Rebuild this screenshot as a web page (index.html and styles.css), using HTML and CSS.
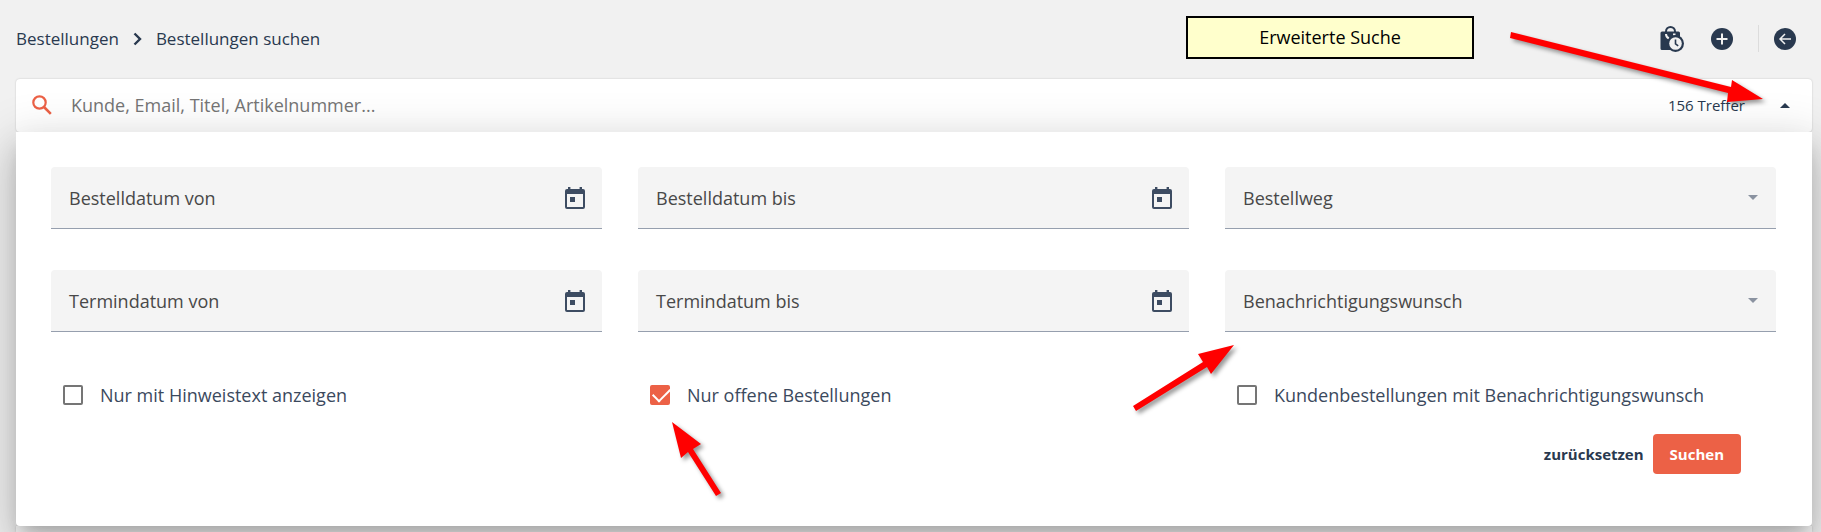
FILE: index.html
```html
<!DOCTYPE html>
<html lang="de">
    <head>
        <title>Bestellungen suchen</title>
        <meta charset="UTF-8">
        <link rel="stylesheet" href="styles.css">
    </head>
    <body>
        <header class="header">
            <nav class="breadcrumb">
                <a href="#">Bestellungen</a>
                <svg width="9" height="14" viewBox="0 0 9 14"><path d="M1.500 1.500L7 7l-5.500 5.500" fill="none" stroke="currentColor" stroke-width="2.400"/></svg>
                <a href="#">Bestellungen suchen</a>
            </nav>
            <div class="actions">
                <button class="icon-button" type="button" aria-label="Offene Bestellungen">
                    <svg width="24" height="26" viewBox="0 0 24 26">
                        <path d="M6 7V5.500a4.500 4.500 0 0 1 9 0V7" fill="none" stroke="currentColor" stroke-width="2"/>
                        <path d="M2 5.500h16.500a1.500 1.500 0 0 1 1.500 1.500V24H2a1.500 1.500 0 0 1-1.500-1.500V7A1.500 1.500 0 0 1 2 5.500z" fill="currentColor"/>
                        <path d="M6 8c0 2 1 3.500 3 4.500M15.500 8.500H13" fill="none" stroke="#f1f1f1" stroke-width="2"/>
                        <circle cx="15.500" cy="17.500" r="8.500" fill="currentColor"/>
                        <circle cx="15.500" cy="17.500" r="6.300" fill="#f1f1f1"/>
                        <path d="M15.500 13.500v4.300l2.700 2" fill="none" stroke="currentColor" stroke-width="1.600"/>
                    </svg>
                </button>
                <button class="icon-button" type="button" aria-label="Neu">
                    <svg width="22" height="22" viewBox="0 0 22 22"><circle cx="11" cy="11" r="11" fill="currentColor"/><path d="M11 5.500v11M5.500 11h11" stroke="#f1f1f1" stroke-width="2"/></svg>
                </button>
                <span class="divider"></span>
                <button class="icon-button" type="button" aria-label="Zurück">
                    <svg width="22" height="22" viewBox="0 0 22 22"><circle cx="11" cy="11" r="11" fill="currentColor"/><path d="M17 11H6.500M11 6l-5 5 5 5" fill="none" stroke="#f1f1f1" stroke-width="1.500"/></svg>
                </button>
            </div>
            <div class="note">Erweiterte Suche</div>
        </header>

        <main class="content">
            <div class="search-bar">
                <svg width="20" height="20" viewBox="0 0 20 20" class="search-icon"><circle cx="7.500" cy="7.500" r="6.200" fill="none" stroke="currentColor" stroke-width="2.200"/><path d="M12 12l6.800 6.800" stroke="currentColor" stroke-width="2.600"/></svg>
                <input class="search-input" type="text" aria-label="Suche" placeholder="Kunde, Email, Titel, Artikelnummer...">
                <span class="hits">156 Treffer</span>
                <button class="icon-button" type="button" aria-label="Erweiterte Suche">
                    <svg width="10" height="5" viewBox="0 0 10 5"><path d="M0 5l5-5 5 5z" fill="currentColor"/></svg>
                </button>
            </div>

            <form class="panel">
                <div class="field">
                    <label for="order-from">Bestelldatum von</label>
                    <input id="order-from" type="text">
                    <button class="icon-button" type="button" aria-label="Kalender">
                        <svg class="calendar" width="20" height="22" viewBox="0 0 20 22"><path d="M3 0h2.400v2h9.200V0H17v2h1a2 2 0 0 1 2 2v16a2 2 0 0 1-2 2H2a2 2 0 0 1-2-2V4a2 2 0 0 1 2-2h1zM2 7v13h16V7zM5 10h5v5H5z" fill="currentColor" fill-rule="evenodd"/></svg>
                    </button>
                </div>
                <div class="field">
                    <label for="order-to">Bestelldatum bis</label>
                    <input id="order-to" type="text">
                    <button class="icon-button" type="button" aria-label="Kalender">
                        <svg class="calendar" width="20" height="22" viewBox="0 0 20 22"><path d="M3 0h2.400v2h9.200V0H17v2h1a2 2 0 0 1 2 2v16a2 2 0 0 1-2 2H2a2 2 0 0 1-2-2V4a2 2 0 0 1 2-2h1zM2 7v13h16V7zM5 10h5v5H5z" fill="currentColor" fill-rule="evenodd"/></svg>
                    </button>
                </div>
                <div class="field">
                    <label for="order-way">Bestellweg</label>
                    <select id="order-way"><option></option></select>
                    <svg class="caret" width="10" height="5" viewBox="0 0 10 5"><path d="M0 0h10L5 5z" fill="currentColor"/></svg>
                </div>

                <div class="field">
                    <label for="due-from">Termindatum von</label>
                    <input id="due-from" type="text">
                    <button class="icon-button" type="button" aria-label="Kalender">
                        <svg class="calendar" width="20" height="22" viewBox="0 0 20 22"><path d="M3 0h2.400v2h9.200V0H17v2h1a2 2 0 0 1 2 2v16a2 2 0 0 1-2 2H2a2 2 0 0 1-2-2V4a2 2 0 0 1 2-2h1zM2 7v13h16V7zM5 10h5v5H5z" fill="currentColor" fill-rule="evenodd"/></svg>
                    </button>
                </div>
                <div class="field">
                    <label for="due-to">Termindatum bis</label>
                    <input id="due-to" type="text">
                    <button class="icon-button" type="button" aria-label="Kalender">
                        <svg class="calendar" width="20" height="22" viewBox="0 0 20 22"><path d="M3 0h2.400v2h9.200V0H17v2h1a2 2 0 0 1 2 2v16a2 2 0 0 1-2 2H2a2 2 0 0 1-2-2V4a2 2 0 0 1 2-2h1zM2 7v13h16V7zM5 10h5v5H5z" fill="currentColor" fill-rule="evenodd"/></svg>
                    </button>
                </div>
                <div class="field">
                    <label for="notify">Benachrichtigungswunsch</label>
                    <select id="notify"><option></option></select>
                    <svg class="caret" width="10" height="5" viewBox="0 0 10 5"><path d="M0 0h10L5 5z" fill="currentColor"/></svg>
                    <svg class="arrow arrow-notify" width="102" height="68" viewBox="0 0 102 68"><path d="M101 1L65 10l5 8L0 62l3 5 71-44 4 7z" fill="#f00"/></svg>
                </div>

                <div class="check">
                    <input id="with-hint" type="checkbox">
                    <label for="with-hint">Nur mit Hinweistext anzeigen</label>
                </div>
                <div class="check">
                    <input id="only-open" type="checkbox" checked>
                    <label for="only-open">Nur offene Bestellungen</label>
                    <svg class="arrow arrow-open" width="50" height="74" viewBox="0 0 50 74"><path d="M0 0l29 22-8 5 28 44-5 3-28-44-7 6z" fill="#f00"/></svg>
                </div>
                <div class="check">
                    <input id="with-notify" type="checkbox">
                    <label for="with-notify">Kundenbestellungen mit Benachrichtigungswunsch</label>
                </div>

                <div class="buttons">
                    <button class="reset" type="reset">zurücksetzen</button>
                    <button class="submit" type="submit">Suchen</button>
                </div>
            </form>
            <div class="results"></div>
        </main>

        <svg class="arrow arrow-toggle" width="254" height="72" viewBox="0 0 254 72"><path d="M1 0l220 55 1-7 31 19-36 3 1-9L0 6z" fill="#f00"/></svg>
    </body>
</html>
```

FILE: styles.css
```css
* {
    box-sizing: border-box;
}

body {
    margin: 0;
    position: relative;
    min-height: 100vh;
    overflow: hidden;
    display: flex;
    flex-direction: column;
    background-color: #f1f1f1;
    color: #29394f;
    font-family: "Open Sans", "Noto Sans", sans-serif;
    font-size: 18px;
    line-height: 24px;
}

svg {
    display: block;
    flex: none;
}

a {
    color: inherit;
    text-decoration: none;
}

button, input, select {
    margin: 0;
    padding: 0;
    border: 0;
    background: none;
    color: inherit;
    font: inherit;
    outline: none;
}

.icon-button {
    cursor: pointer;
}

/* header */

.header {
    position: relative;
    display: flex;
    justify-content: space-between;
    align-items: center;
    height: 79px;
    padding: 0 25px 2px 16px;
}

.breadcrumb {
    display: flex;
    align-items: center;
    gap: 14px;
    font-size: 17px;
}

.actions {
    display: flex;
    align-items: center;
    gap: 27px;
}

.divider {
    width: 1px;
    height: 27px;
    margin: 0 -12px 0 -2px;
    background-color: #dcdcdc;
}

.note {
    position: absolute;
    top: 16px;
    right: 347px;
    width: 288px;
    height: 43px;
    border: 2px solid #000;
    background-color: #ffc;
    color: #000;
    line-height: 38px;
    text-align: center;
}

/* search */

.content {
    flex: 1;
    display: flex;
    flex-direction: column;
    margin: 0 9px 0 16px;
}

.search-bar {
    display: flex;
    align-items: center;
    height: 53px;
    padding: 0 22px 1px 16px;
    border-radius: 4px;
    background-color: #fff;
    box-shadow: 0 0 2px rgba(0, 0, 0, 0.2);
}

.search-icon {
    color: #ec6146;
}

.search-input {
    flex: 1;
    min-width: 0;
    margin-left: 19px;
}

.search-input::placeholder {
    color: #757575;
    opacity: 1;
}

.hits {
    margin-right: 35px;
    font-size: 15px;
}

.panel {
    position: relative;
    z-index: 1;
    display: grid;
    grid-template-columns: repeat(3, 1fr);
    gap: 41px 36px;
    padding: 35px 36px 52px 35px;
    border-radius: 0 0 4px 4px;
    background-color: #fff;
    box-shadow: 0 11px 15px -7px rgba(0, 0, 0, 0.2),
                0 24px 38px 3px rgba(0, 0, 0, 0.14),
                0 9px 46px 8px rgba(0, 0, 0, 0.12);
}

.field {
    position: relative;
    display: flex;
    align-items: center;
    height: 62px;
    padding: 0 17px 0 18px;
    border-bottom: 1px solid #969fae;
    border-radius: 4px 4px 0 0;
    background-color: #f4f4f4;
    color: #484848;
}

.field input, .field select {
    flex: 1;
    min-width: 0;
    height: 100%;
    appearance: none;
}

.calendar {
    color: #3d4c62;
}

.caret {
    margin-right: 1px;
    color: #8a92a0;
}

.check {
    position: relative;
    display: flex;
    align-items: center;
    gap: 17px;
    height: 44px;
    padding-left: 12px;
    color: #3b495d;
}

.check input {
    width: 20px;
    height: 20px;
    border: 2px solid #757575;
    border-radius: 2px;
    appearance: none;
}

.check input:checked {
    position: relative;
    border-color: #ec6146;
    background-color: #ec6146;
}

.check input:checked::after {
    content: "";
    position: absolute;
    top: 2px;
    left: 1px;
    width: 15px;
    height: 8px;
    border: solid #fff;
    border-width: 0 0 2px 2px;
    transform: translateY(-1px) rotate(-45deg);
}

.buttons {
    grid-column: 1 / -1;
    display: flex;
    justify-content: flex-end;
    gap: 9px;
    margin-top: -24px;
    padding-right: 35px;
    font-size: 15px;
    font-weight: bold;
}

.submit {
    height: 40px;
    padding: 0 17px;
    border-radius: 4px;
    background-color: #ec6146;
    color: #fff;
}

.results {
    flex: 1;
    background-color: #fff;
    box-shadow: 0 0 2px rgba(0, 0, 0, 0.2);
}

/* red pointers */

.arrow {
    position: absolute;
    z-index: 2;
    overflow: visible;
    pointer-events: none;
    filter: drop-shadow(3px 3px 2px rgba(0, 0, 0, 0.4));
}

.arrow-toggle {
    top: 32px;
    right: 57px;
}

.arrow-notify {
    top: 74px;
    left: -92px;
}

.arrow-open {
    top: 49px;
    left: 34px;
}
```
